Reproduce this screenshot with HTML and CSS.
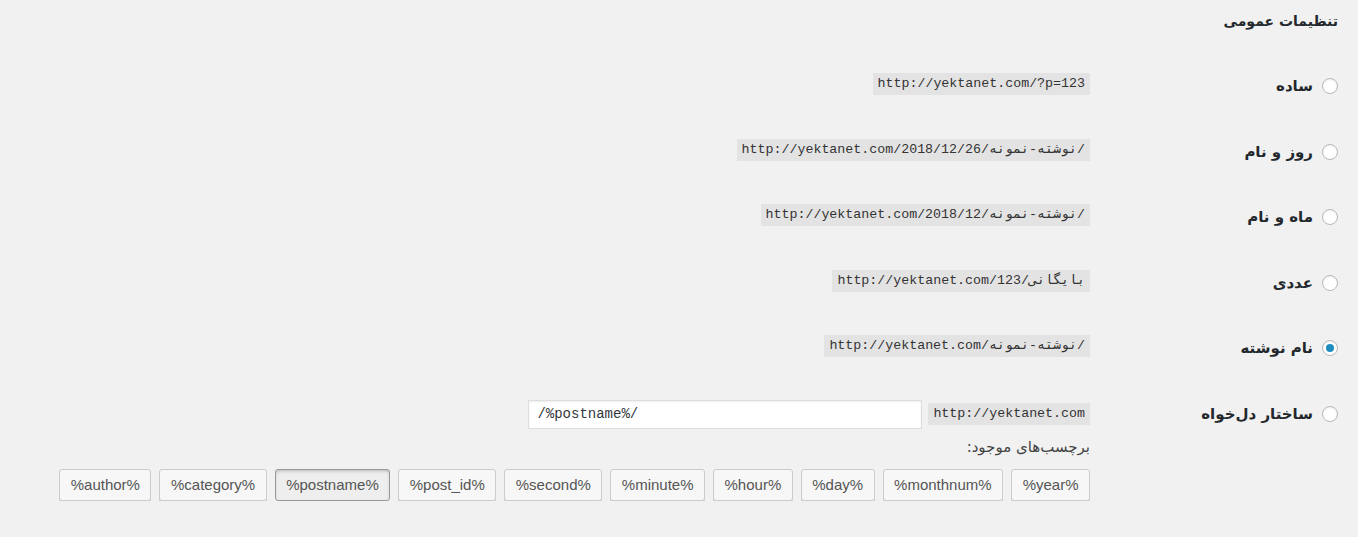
FILE: index.html
```html
<!DOCTYPE html>
<html lang="fa" dir="rtl">
<head>
    <meta charset="UTF-8">
    <title>تنظیمات پیوندهای یکتا</title>
    <link rel="stylesheet" href="styles.css">
</head>
<body>
    <div class="wrap">
        <h2 class="title">تنظیمات عمومی</h2>

        <div class="form-table">
            <div class="row">
                <label class="choice"><span class="radio"></span>ساده</label>
                <div class="field"><code>http://yektanet.com/?p=123</code></div>
            </div>
            <div class="row">
                <label class="choice"><span class="radio"></span>روز و نام</label>
                <div class="field"><code>http://yektanet.com/2018/12/26/نوشته-نمونه/</code></div>
            </div>
            <div class="row">
                <label class="choice"><span class="radio"></span>ماه و نام</label>
                <div class="field"><code>http://yektanet.com/2018/12/نوشته-نمونه/</code></div>
            </div>
            <div class="row">
                <label class="choice"><span class="radio"></span>عددی</label>
                <div class="field"><code>http://yektanet.com/بایگانی/123</code></div>
            </div>
            <div class="row">
                <label class="choice"><span class="radio checked"></span>نام نوشته</label>
                <div class="field"><code>http://yektanet.com/نوشته-نمونه/</code></div>
            </div>
            <div class="row custom">
                <label class="choice"><span class="radio"></span>ساختار دل‌خواه</label>
                <div class="field">
                    <div class="structure">
                        <code>http://yektanet.com</code>
                        <input type="text" class="structure-input" value="/%postname%/">
                    </div>
                    <p class="tags-label">برچسب‌های موجود:</p>
                    <div class="tags">
                        <span class="tag">%year%</span>
                        <span class="tag">%monthnum%</span>
                        <span class="tag">%day%</span>
                        <span class="tag">%hour%</span>
                        <span class="tag">%minute%</span>
                        <span class="tag">%second%</span>
                        <span class="tag">%post_id%</span>
                        <span class="tag active">%postname%</span>
                        <span class="tag">%category%</span>
                        <span class="tag">%author%</span>
                    </div>
                </div>
            </div>
        </div>
    </div>
</body>
</html>
```

FILE: styles.css
```css
* {
    margin: 0;
    padding: 0;
    box-sizing: border-box;
}
body {
    background: #f1f1f1;
    color: #23282d;
    font-family: Tahoma, "DejaVu Sans", sans-serif;
}
.wrap {
    padding: 0 20px 0 0;
}
.title {
    font-size: 14px;
    font-weight: bold;
    line-height: 20px;
    padding-top: 11px;
    height: 61px;
}
.row {
    display: flex;
    height: 65.6px;
}
.row.custom {
    height: auto;
}
.choice {
    width: 248px;
    flex-shrink: 0;
    display: flex;
    align-items: center;
    gap: 9px;
    height: 16px;
    margin-top: 17px;
    font-size: 15px;
    font-weight: bold;
    color: #23282d;
}
.radio {
    width: 16px;
    height: 16px;
    border: 1px solid #b4b9be;
    border-radius: 50%;
    background: #fff;
    box-shadow: inset 0 1px 2px rgba(0, 0, 0, 0.07);
    display: flex;
    align-items: center;
    justify-content: center;
    flex-shrink: 0;
}
.radio.checked::before {
    content: "";
    width: 8px;
    height: 8px;
    border-radius: 50%;
    background: #1e8cbe;
}
.field {
    padding-top: 11px;
}
code {
    display: inline-block;
    direction: ltr;
    unicode-bidi: embed;
    font-family: "Liberation Mono", "DejaVu Sans Mono", monospace;
    font-size: 13.3px;
    line-height: 16px;
    padding: 3px 5px;
    background: #e3e3e3;
    color: #333;
}
.structure {
    display: flex;
    align-items: center;
    gap: 6px;
}
.structure-input {
    width: 394px;
    height: 29px;
    border: 1px solid #ddd;
    box-shadow: inset 0 1px 2px rgba(0, 0, 0, 0.07);
    background: #fff;
    direction: ltr;
    padding: 0 8px;
    font-family: "Liberation Mono", "DejaVu Sans Mono", monospace;
    font-size: 14px;
    color: #32373c;
}
.tags-label {
    font-size: 15px;
    line-height: 20px;
    margin-top: 8px;
    color: #444;
}
.tags {
    display: flex;
    gap: 8px;
    margin-top: 12px;
}
.tag {
    display: flex;
    align-items: center;
    height: 32px;
    padding: 0 10.5px;
    border: 1px solid #ccc;
    border-radius: 3px;
    background: #f7f7f7;
    box-shadow: 0 1px 0 #ccc;
    color: #555;
    font-family: "Liberation Sans", Arial, sans-serif;
    font-size: 15px;
    direction: ltr;
    white-space: nowrap;
    cursor: pointer;
}
.tag.active {
    background: #eee;
    border-color: #999;
    box-shadow: inset 0 2px 5px -3px rgba(0, 0, 0, 0.5);
}
```
